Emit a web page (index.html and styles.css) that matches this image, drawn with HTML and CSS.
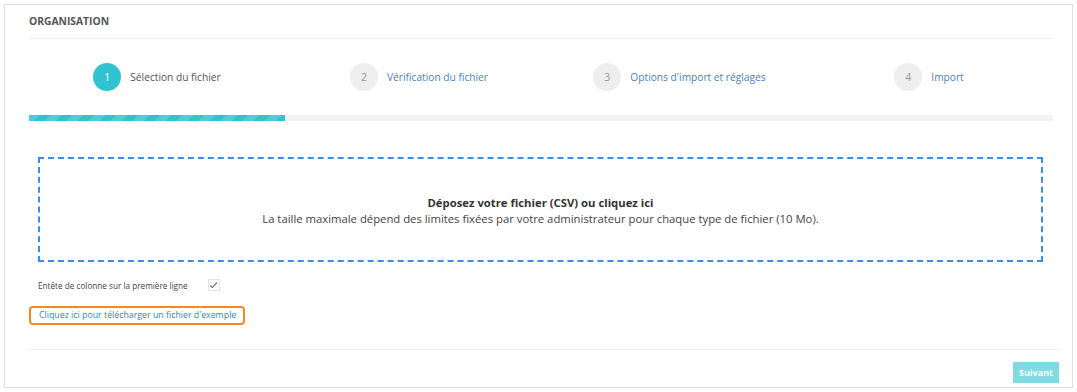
FILE: index.html
```html
<!DOCTYPE html>
<html lang="fr">
<head>
  <meta charset="UTF-8">
  <title>Organisation - Import</title>
  <link rel="stylesheet" href="styles.css">
</head>
<body>

<div class="card">
  <div class="card-header">ORGANISATION</div>

  <div class="steps">
    <div class="step active"><span class="num">1</span><span class="label">Sélection du fichier</span></div>
    <div class="step"><span class="num">2</span><span class="label">Vérification du fichier</span></div>
    <div class="step"><span class="num">3</span><span class="label">Options d'import et réglages</span></div>
    <div class="step"><span class="num">4</span><span class="label">Import</span></div>
  </div>

  <div class="progress"><div class="progress-bar"></div></div>

  <div class="dropzone">
    <strong>Déposez votre fichier (CSV) ou cliquez ici</strong>
    <span>La taille maximale dépend des limites fixées par votre administrateur pour chaque type de fichier (10 Mo).</span>
  </div>

  <div class="option">
    <span>Entête de colonne sur la première ligne</span>
    <span class="check">
      <svg width="9" height="8" viewBox="0 0 9 8"><path d="M1 4.5 L3.3 6.5 L8 1.5" fill="none" stroke="#777" stroke-width="1.2"/></svg>
    </span>
  </div>

  <a class="sample" href="#">Cliquez ici pour télécharger un fichier d'exemple</a>

  <div class="card-footer">
    <button class="btn" disabled>Suivant</button>
  </div>
</div>

</body>
</html>
```

FILE: styles.css
```css
body {
  margin: 0;
  padding: 4px;
  font-family: 'Open Sans', 'Liberation Sans', sans-serif;
  background: #fff;
  color: #444;
}

.card {
  width: 1069px;
  height: 384px;
  border: 1px solid #e1e1e1;
  padding: 0 19px 0 24px;
  box-sizing: border-box;
  display: flex;
  flex-direction: column;
}

.card-header {
  height: 33px;
  line-height: 32px;
  font-size: 10.3px;
  font-weight: bold;
  color: #555;
  border-bottom: 1px solid #eee;
}

.steps {
  display: flex;
  height: 76px;
  align-items: center;
}

.step {
  width: 25%;
  flex: none;
  box-sizing: border-box;
  display: flex;
  align-items: center;
  justify-content: center;
  gap: 9px;
  font-size: 10.2px;
  color: #4f7fb3;
}

.step:nth-child(2) { padding-left: 12px; }
.step:nth-child(3) { padding-left: 21px; }
.step:nth-child(4) { padding-left: 8px; }

.step .num {
  width: 28px;
  height: 28px;
  border-radius: 50%;
  background: #eee;
  color: #999;
  display: flex;
  align-items: center;
  justify-content: center;
  font-size: 10.5px;
}

.step.active { color: #555; }

.step.active .num {
  background: #31c3d0;
  color: #fff;
}

.progress {
  height: 6px;
  background: #f2f2f2;
}

.progress-bar {
  width: 25%;
  height: 100%;
  background-color: #31c3d0;
  background-image: linear-gradient(135deg, rgba(255,255,255,0.15) 25%, transparent 25%, transparent 50%, rgba(255,255,255,0.15) 50%, rgba(255,255,255,0.15) 75%, transparent 75%, transparent);
  background-size: 22px 22px;
}

.dropzone {
  margin: 36px 10px 0 9px;
  height: 105px;
  border: 2px dashed #3a8ee6;
  box-sizing: border-box;
  display: flex;
  flex-direction: column;
  align-items: center;
  justify-content: center;
  font-size: 11.3px;
  color: #444;
  line-height: 16px;
  padding-top: 2px;
}

.dropzone strong { color: #333; }

.option {
  margin: 11px 10px 0 9px;
  display: flex;
  align-items: center;
  gap: 20px;
  font-size: 8.2px;
  color: #444;
  height: 24px;
}

.check {
  width: 10px;
  height: 10px;
  border: 1px solid #e4e4e4;
  display: flex;
  align-items: center;
  justify-content: center;
}

.sample {
  align-self: flex-start;
  margin-top: 9px;
  padding: 1px 7px 1px 8px;
  border: 2px solid #f08a24;
  border-radius: 4px;
  font-size: 8.8px;
  line-height: 13px;
  color: #3a7fc4;
  text-decoration: none;
}

.card-footer {
  margin-top: 24px;
  border-top: 1px solid #eee;
  display: flex;
  justify-content: flex-end;
  padding-top: 12px;
  margin-right: -6px;
}

.btn {
  background: #7fdae3;
  color: #fff;
  border: none;
  font-family: inherit;
  font-size: 9px;
  font-weight: bold;
  width: 46px;
  height: 21px;
  padding: 0;
}
```
